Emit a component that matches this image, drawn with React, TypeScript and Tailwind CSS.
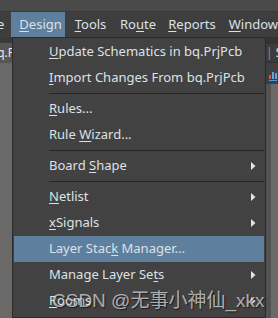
import React from "react";

type Item =
  | { kind: "item"; pre: string; key: string; post: string; sub?: boolean; active?: boolean }
  | { kind: "sep" };

const items: Item[] = [
  { kind: "item", pre: "", key: "U", post: "pdate Schematics in bq.PrjPcb" },
  { kind: "item", pre: "", key: "I", post: "mport Changes From bq.PrjPcb" },
  { kind: "sep" },
  { kind: "item", pre: "", key: "R", post: "ules..." },
  { kind: "item", pre: "Rule ", key: "W", post: "izard..." },
  { kind: "sep" },
  { kind: "item", pre: "Board ", key: "S", post: "hape", sub: true },
  { kind: "sep" },
  { kind: "item", pre: "", key: "N", post: "etlist", sub: true },
  { kind: "item", pre: "", key: "x", post: "Signals", sub: true },
  { kind: "item", pre: "Layer Stac", key: "k", post: " Manager...", active: true },
  { kind: "item", pre: "Manage Layer Se", key: "t", post: "s", sub: true },
  { kind: "item", pre: "", key: "R", post: "ooms", sub: true },
];

function Label({ pre, k, post }: { pre: string; k: string; post: string }) {
  return (
    <span className="whitespace-nowrap">
      {pre}
      <span className="underline underline-offset-2 decoration-1">{k}</span>
      {post}
    </span>
  );
}

function Arrow() {
  return (
    <svg width="5" height="8" viewBox="0 0 5 8" className="absolute right-[8px] top-[9px]">
      <path d="M0 0 L4.5 4 L0 8 Z" fill="#e4e4e4" />
    </svg>
  );
}

export default function App() {
  const font = { fontFamily: '"Noto Sans", "Open Sans", sans-serif' };
  return (
    <div
      className="w-[278px] h-[318px] overflow-hidden bg-[#6b6868] flex flex-col text-[#dde1e6] relative"
      style={font}
    >
      {/* title strip */}
      <div className="h-[12px] bg-[#4a4a4a] border-b border-[#383838] shrink-0" />

      {/* menu bar */}
      <div className="h-[25px] bg-[#3e3e3e] flex items-center text-[13px] shrink-0">
        <div className="w-[12px] overflow-hidden flex justify-end">
          <span className="whitespace-nowrap pr-[7px]">Place</span>
        </div>
        <div className="h-full bg-[#5f7f9e] w-[56px] flex items-center pl-[8px]">
          <Label pre="" k="D" post="esign" />
        </div>
        <div className="ml-[10px] w-[48px]">
          <Label pre="" k="T" post="ools" />
        </div>
        <div className="w-[51px]">
          <Label pre="Ro" k="u" post="te" />
        </div>
        <div className="w-[64px]">
          <Label pre="" k="R" post="eports" />
        </div>
        <div>
          <Label pre="" k="W" post="indow" />
        </div>
      </div>

      <div className="flex flex-1 min-h-0">
        {/* left document tab strip */}
        <div className="w-[12px] flex flex-col shrink-0">
          <div className="h-[6px] bg-[#3a3a3a]" />
          <div className="h-[20px] bg-[#575555] overflow-hidden flex justify-end items-center text-[12px] text-[#e8e8e8]">
            <span className="whitespace-nowrap -mr-[3px]">bq.P</span>
          </div>
          <div className="flex-1 bg-[#6b6868]" />
        </div>

        {/* dropdown */}
        <div className="w-[254px] shrink-0 bg-[#424242] border border-[#2a2a2a] p-px text-[13px]">
          {items.map((it, i) =>
            it.kind === "sep" ? (
              <div key={i} className="h-[5px] pl-[35px] pt-[2px]">
                <div className="h-px bg-[#262626]" />
              </div>
            ) : (
              <div
                key={i}
                className={`relative h-[26px] flex items-center pl-[35px] ${it.active ? "bg-[#5f7f9e]" : ""}`}
              >
                <Label pre={it.pre} k={it.key} post={it.post} />
                {it.sub && <Arrow />}
              </div>
            )
          )}
        </div>

        {/* right edge panel */}
        <div className="w-[12px] flex flex-col shrink-0">
          <div className="h-[7px] bg-[#333333]" />
          <div className="h-[18px] bg-[#3c3c3c] flex items-center text-[12px] whitespace-nowrap overflow-hidden">
            <span className="text-[#888] mr-[3px]">|</span>
            <span>S</span>
          </div>
          <div className="h-[22px] bg-[#3f3f3f] flex items-end pb-[3px] pl-[3px] border-t border-[#2f2f2f]">
            <div className="flex items-end gap-px border-b border-[#4d9be0] pb-px">
              <div className="w-[2px] h-[4px] bg-[#d9534f]" />
              <div className="w-[2px] h-[7px] bg-[#5aa7e6]" />
              <div className="w-[2px] h-[6px] bg-[#5aa7e6]" />
            </div>
          </div>
          <div className="flex-1 flex">
            <div className="w-[5px] bg-[#535252]" />
            <div className="flex-1 bg-[#6c6969]" />
          </div>
        </div>
      </div>

      {/* watermark */}
      <div
        className="absolute left-[52px] top-[287px] text-[19px] text-[#e6e6e6]/70 whitespace-nowrap"
        style={{ fontFamily: '"Liberation Sans", "Noto Sans CJK SC", sans-serif', textShadow: "1px 1px 1px rgba(0,0,0,0.6)" }}
      >
        CSDN @无事小神仙_xkx
      </div>
    </div>
  );
}
